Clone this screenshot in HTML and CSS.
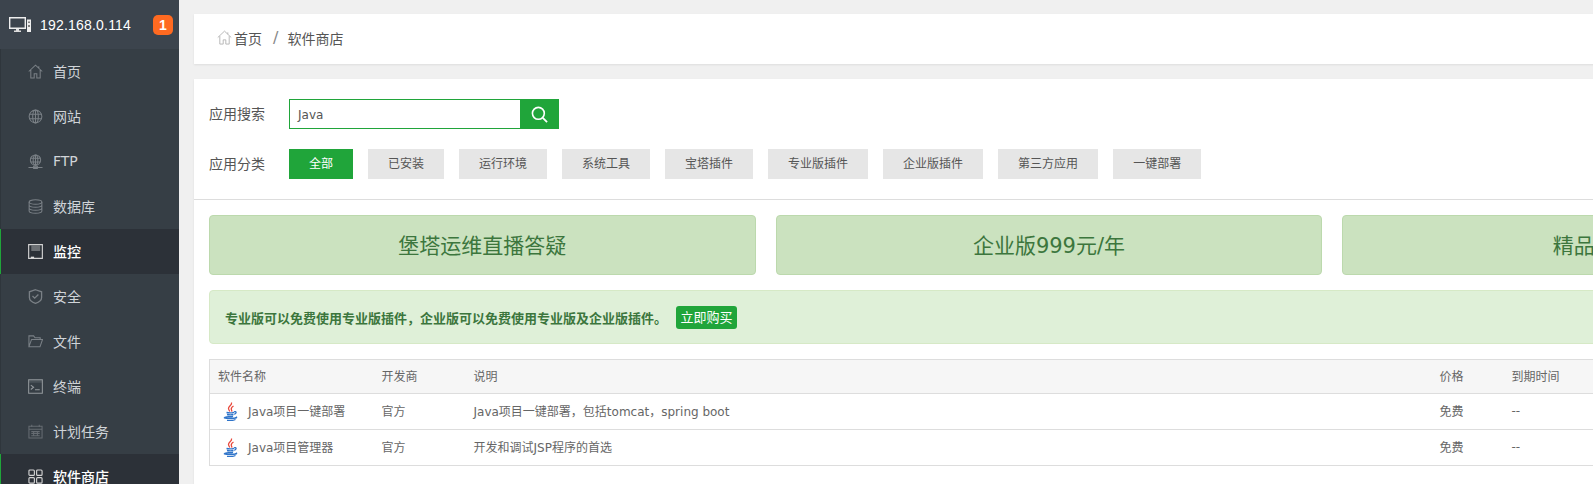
FILE: index.html
```html
<!DOCTYPE html>
<html lang="zh-CN">
<head>
<meta charset="utf-8">
<title>软件商店</title>
<link rel="stylesheet" href="styles.css">
</head>
<body>
<div class="app">
  <aside class="sidebar">
    <div class="host">
      <svg class="host-icon" viewBox="0 0 23 16" width="23" height="16"><path d="M.7.7h15.600v10.600H.7z" fill="none" stroke="#eee" stroke-width="1.400"/><path d="M7 12h3v1.500H7zM5 13.500h7V15H5z" fill="#ddd"/><path d="M18 2.500h4V15h-4z" fill="#eee"/><path d="M19.300 4.500h1.400V6h-1.400zM19.300 8h1.400v2h-1.400z" fill="#555"/></svg>
      <span class="host-ip">192.168.0.114</span>
      <span class="host-badge">1</span>
    </div>
    <nav class="menu">
      <a class="item"><svg class="ico" viewBox="0 0 16 16"><path d="M.8 8 8 1.200 15.200 8M3 6.500V15h3.600v-4.500h2.800V15H13V6.500M11.500 2.500v2"/></svg><span class="label">首页</span></a>
      <a class="item"><svg class="ico" viewBox="0 0 16 16"><circle cx="8" cy="8" r="6.800"/><ellipse cx="8" cy="8" rx="3" ry="6.800"/><path d="M1.500 5.500h13M1.500 10.500h13M8 1.200v13.600"/></svg><span class="label">网站</span></a>
      <a class="item"><svg class="ico" viewBox="0 0 16 16"><circle cx="8" cy="6.500" r="5.500"/><ellipse cx="8" cy="6.500" rx="2.500" ry="5.500"/><path d="M2.800 4.500h10.400M2.800 8.500h10.400M8 1v11M.5 14.500h15M6 13h4v2.500H6z"/></svg><span class="label">FTP</span></a>
      <a class="item"><svg class="ico" viewBox="0 0 16 16"><ellipse cx="8" cy="3.200" rx="6.800" ry="2.400"/><path d="M1.200 3.200v9.600c0 1.300 3 2.400 6.800 2.400s6.800-1.100 6.800-2.400V3.200M1.200 6.400c0 1.300 3 2.400 6.800 2.400s6.800-1.100 6.800-2.400M1.200 9.600c0 1.300 3 2.400 6.800 2.400s6.800-1.100 6.800-2.400"/></svg><span class="label">数据库</span></a>
      <a class="item active"><svg class="ico" viewBox="0 0 16 16"><path d="M.7.7h14.600v14.600H.7z"/><path class="solid" d="M3.500 1h9.500v6.500H3.500z"/><path class="solid-light" d="M3 13.500h3.500V15H3z"/></svg><span class="label">监控</span></a>
      <a class="item"><svg class="ico thick" viewBox="0 0 16 16"><path d="M8 .8 14.500 3v6c0 3-3 5.200-6.500 6.300C4.500 14.200 1.500 12 1.500 9V3z"/><path d="m4.800 7.500 2.300 2.300 4-4"/></svg><span class="label">安全</span></a>
      <a class="item"><svg class="ico" viewBox="0 0 16 16"><path d="M1 13.500V2h5l1.500 2H13v1.800M1 13.500h11.800L15.500 5.800H3.800z"/></svg><span class="label">文件</span></a>
      <a class="item"><svg class="ico light" viewBox="0 0 16 16"><path class="bar" d="M1 1h14v3H1z"/><path d="M.7.7h14.600v14.600H.7zM3 6.500 6 8.800 3 11.200M7.500 11.500h5"/></svg><span class="label">终端</span></a>
      <a class="item"><svg class="ico dim" viewBox="0 0 16 16"><path d="M1 2.500h14V15H1zM1 5.500h14M4 .8v2.500M12 .8v2.500M3.500 8h9M3.500 10h9M3.500 12.500h9M6 7.500v5.500M10 7.500v5.500"/></svg><span class="label">计划任务</span></a>
      <a class="item active"><svg class="ico" viewBox="0 0 16 16"><rect x="1" y="1" width="5.800" height="5.800" rx="1"/><rect x="9.200" y="1" width="5.800" height="5.800" rx="1"/><rect x="1" y="9.200" width="5.800" height="5.800" rx="1"/><rect x="9.200" y="9.200" width="5.800" height="5.800" rx="1"/></svg><span class="label">软件商店</span></a>
    </nav>
  </aside>
  <main class="main">
    <div class="crumbs card">
      <svg class="crumb-home" viewBox="0 0 16 16"><path d="M.8 8 8 1.200 15.200 8M3 6.500V15h3.600v-4.500h2.800V15H13V6.500M11.500 2.500v2"/></svg>
      <span class="crumb-text">首页</span><span class="crumb-sep">/</span><span class="crumb-text">软件商店</span>
    </div>
    <section class="panel card">
      <div class="filters">
        <div class="filter-row">
          <span class="filter-label">应用搜索</span>
          <div class="search"><span class="search-input">Java</span><span class="search-btn"><svg viewBox="0 0 18 18" width="17" height="17"><circle cx="7.800" cy="7.800" r="6.300" fill="none" stroke="#fff" stroke-width="1.700"/><path d="m12.500 12.500 4.500 4.500" stroke="#fff" stroke-width="1.900"/></svg></span></div>
        </div>
        <div class="filter-row cats">
          <span class="filter-label">应用分类</span>
          <span class="cat on">全部</span>
          <span class="cat">已安装</span>
          <span class="cat">运行环境</span>
          <span class="cat">系统工具</span>
          <span class="cat">宝塔插件</span>
          <span class="cat">专业版插件</span>
          <span class="cat">企业版插件</span>
          <span class="cat">第三方应用</span>
          <span class="cat">一键部署</span>
        </div>
      </div>
      <div class="body">
        <div class="banners">
          <div class="banner">堡塔运维直播答疑</div>
          <div class="banner">企业版999元/年</div>
          <div class="banner">精品软件推荐</div>
        </div>
        <div class="notice"><b>专业版可以免费使用专业版插件，企业版可以免费使用专业版及企业版插件。</b><span class="buy">立即购买</span></div>
        <table class="soft">
          <colgroup><col class="c1"><col class="c2"><col class="c3"><col class="c4"><col class="c5"></colgroup>
          <thead><tr><th>软件名称</th><th>开发商</th><th>说明</th><th>价格</th><th>到期时间</th></tr></thead>
          <tbody>
            <tr><td class="name-cell"><span class="soft-name"><svg class="java" viewBox="0 0 15 19"><path class="jr" d="M8.500.5c1 2.500-3.200 3.700-3 6 .1 1.200.9 2 1.300 3"/><path class="jr" d="M10.500 4C8.800 5 8 6 8.300 7.300c.2.800.7 1.300.4 2.300"/><path class="jb" d="M3.500 10.500c2 .5 5.500.5 7.500-.1M4 12.500c2 .4 5 .4 6.500 0M4.500 14.300c1.500.3 4 .3 5.500 0M11 9.800c2.500-.8 3 1.500.3 2.500M1.500 16c-.5-.7 1-1 2-1 -1 .6 0 1 3.500 1.200 3 .1 5.500-.2 6.500-1 .5.800-1.500 1.400-5.500 1.500-3 0-5.500-.2-6.500-.7zM4 18.300c3 .4 6.500.2 8.500-.8"/></svg><span class="name-text">Java项目一键部署</span></span></td><td>官方</td><td>Java项目一键部署，包括tomcat，spring boot</td><td>免费</td><td>--</td></tr>
            <tr><td class="name-cell"><span class="soft-name"><svg class="java" viewBox="0 0 15 19"><path class="jr" d="M8.500.5c1 2.500-3.200 3.700-3 6 .1 1.200.9 2 1.300 3"/><path class="jr" d="M10.500 4C8.800 5 8 6 8.300 7.300c.2.800.7 1.300.4 2.300"/><path class="jb" d="M3.500 10.500c2 .5 5.500.5 7.500-.1M4 12.500c2 .4 5 .4 6.500 0M4.500 14.300c1.500.3 4 .3 5.500 0M11 9.800c2.500-.8 3 1.500.3 2.500M1.500 16c-.5-.7 1-1 2-1 -1 .6 0 1 3.500 1.200 3 .1 5.500-.2 6.500-1 .5.800-1.500 1.400-5.500 1.500-3 0-5.500-.2-6.500-.7zM4 18.300c3 .4 6.500.2 8.500-.8"/></svg><span class="name-text">Java项目管理器</span></span></td><td>官方</td><td>开发和调试JSP程序的首选</td><td>免费</td><td>--</td></tr>
          </tbody>
        </table>
      </div>
    </section>
  </main>
</div>
</body>
</html>
```

FILE: styles.css
```css
* { box-sizing: border-box; }
html, body { margin: 0; height: 484px; overflow: hidden; }
body {
  background: #f0f0f0;
  font-family: "DejaVu Sans", "Noto Sans CJK SC", sans-serif;
  font-size: 12px;
  color: #555;
}
.app { display: flex; width: 1905px; height: 484px; }

.sidebar { flex: none; width: 179px; height: 484px; overflow: hidden; background: #363e45; }
.host {
  height: 49px; display: flex; align-items: center;
  padding: 0 6px 0 9px;
  background: #3c444d;
  color: #fff;
}
.host-icon { flex: none; }
.host-ip { margin-left: 8px; font-family: "Liberation Sans", sans-serif; font-size: 14px; letter-spacing: .2px; flex: 1; }
.host-badge {
  width: 20px; height: 20px; border-radius: 5px;
  background: #ff6a21; color: #fff;
  font: bold 14px/20px "Liberation Sans", sans-serif; text-align: center;
}
.item {
  height: 45px; display: flex; align-items: center;
  padding-left: 27px;
  border-left: 1px solid #2f363c;
  color: #d0d4d8;
  font-size: 14px;
}
.label { margin-top: -2px; }
.item.active { background: #2c3138; border-left-color: #20a53a; color: #fff; font-weight: 500; }
.ico {
  flex: none; width: 15px; height: 15px; margin-right: 10px;
  fill: none; stroke: #7a8086; stroke-width: 1.100;
}
.ico .solid { fill: #6c7074; stroke: none; }
.ico .solid-light { fill: #ddd; stroke: none; }
.item.active .ico { stroke: #d4d4d4; stroke-width: 1.200; }
.ico.thick { stroke-width: 1.400; }
.ico.light { stroke: #94999d; }
.ico .bar { fill: #4a5258; stroke: none; }
.ico.dim { stroke: #666c72; }

.main { flex: none; width: 1726px; padding: 14px 0 0 15px; }
.card { background: #fff; box-shadow: 0 1px 2px rgba(0,0,0,.08); }
.crumbs {
  height: 50px; display: flex; align-items: center; padding: 0 0 3px 23px;
  font-size: 14px; color: #555;
}
.crumb-home { width: 15px; height: 15px; margin-right: 2px; fill: none; stroke: #b5b5b5; stroke-width: 1; }
.crumb-sep { margin: 0 9px 0 11px; color: #888; font-size: 16px; }
.panel { margin-top: 15px; height: 500px; }
.filters { height: 121px; padding: 20px 15px 0; border-bottom: 1px solid #ddd; }
.filter-row { display: flex; align-items: center; height: 30px; }
.cats { margin-top: 20px; gap: 15px; }
.filter-label { width: 80px; font-size: 14px; color: #555; padding-bottom: 2px; }
.cats .filter-label { margin-right: -15px; }
.search { display: flex; width: 270px; height: 30px; }
.search-input {
  width: 231px; height: 30px; border: 1px solid #20a53a; border-right: 0;
  padding-left: 8px; line-height: 30px; font-size: 12px; color: #555;
}
.search-btn { width: 39px; background: #20a53a; display: flex; align-items: center; justify-content: center; }
.cat { height: 30px; padding: 0 20px; line-height: 31px; background: #e6e6e6; color: #555; }
.cat.on { background: #20a53a; color: #fff; }

.body { padding: 15px; }
.banners { display: grid; grid-template-columns: repeat(3, 546.67px); column-gap: 20px; }
.banner {
  height: 60px; background: #cbe2bf; border: 1px solid #bcd9ad; border-radius: 4px;
  color: #3c763d; font-size: 21px; line-height: 60px; text-align: center; white-space: nowrap;
}
.notice {
  margin-top: 15px; height: 54px; padding-left: 15px;
  display: flex; align-items: center;
  background: #dff0d8; border: 1px solid #d6e9c6; border-radius: 4px;
  color: #3c763d; font-size: 13px;
}
.notice b { font-weight: 700; }
.buy {
  margin-left: 9px; padding: 0 4.500px; height: 23px; line-height: 23px;
  background: #20a53a; color: #fff; border-radius: 3px;
}
.soft { margin-top: 15px; width: 100%; border-collapse: collapse; table-layout: fixed; border: 1px solid #ddd; }
.c1 { width: 164px; } .c2 { width: 92px; } .c3 { width: 966px; } .c4 { width: 72px; }
.soft th { height: 34px; padding: 0 8px 2px; background: #f6f6f6; font-weight: 400; text-align: left; border-bottom: 1px solid #ddd; color: #666; }
.soft td { height: 36px; padding: 0 8px 2px; border-bottom: 1px solid #ddd; color: #666; }
.soft td.name-cell { padding-bottom: 0; }
.soft-name { display: flex; align-items: center; }
.name-text { margin-top: -2px; }
.java { width: 15px; height: 19px; margin: 0 10px 0 5px; fill: none; stroke-width: 1.300; }
.jr { stroke: #e8483c; }
.jb { stroke: #2f74c9; }
```
